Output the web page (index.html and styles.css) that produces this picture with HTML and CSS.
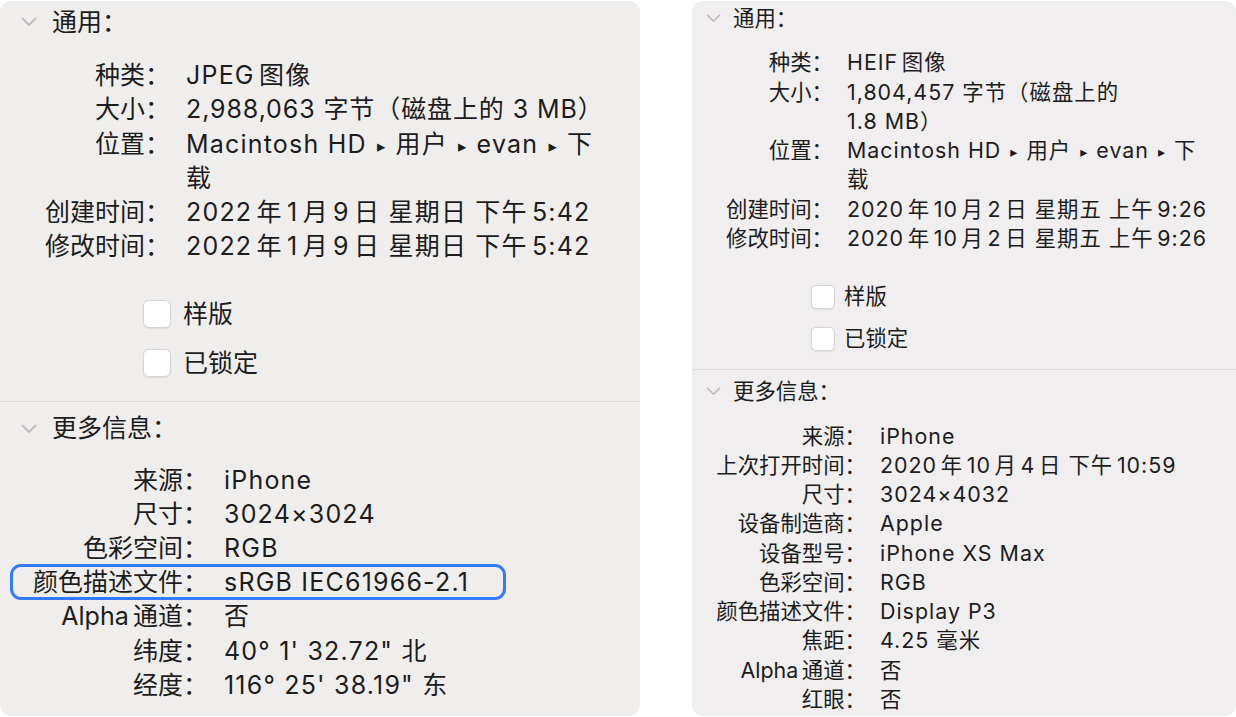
FILE: index.html
```html
<!DOCTYPE html>
<html lang="zh-CN">
<head>
<meta charset="utf-8">
<title>简介</title>
<link rel="stylesheet" href="styles.css">
</head>
<body>
<div class="panel panel-l">
  <section class="sec sec-general">
    <div class="head">
      <svg class="chev" viewBox="0 0 16 10" width="16" height="10"><polyline points="1.5,1.5 8,8 14.5,1.5"/></svg>
      <span>通用：</span>
    </div>
    <div class="rows">
      <div class="row"><span class="k">种类：</span><span class="v"><span class="sr">JPEG</span>图像</span></div>
      <div class="row"><span class="k">大小：</span><span class="v tight">2,988,063 字节（磁盘上的 3 MB）</span></div>
      <div class="row"><span class="k">位置：</span><span class="v">Macintosh HD <i class="tri">▸</i> 用户 <i class="tri">▸</i> evan <i class="tri">▸</i> 下<br>载</span></div>
      <div class="row"><span class="k">创建时间：</span><span class="v"><span class="sr">2022</span>年<span class="s">1</span>月<span class="s">9</span>日 星期日 下午<span class="sl">5:42</span></span></div>
      <div class="row"><span class="k">修改时间：</span><span class="v"><span class="sr">2022</span>年<span class="s">1</span>月<span class="s">9</span>日 星期日 下午<span class="sl">5:42</span></span></div>
    </div>
    <div class="checks">
      <label class="check"><span class="box"></span><span>样版</span></label>
      <label class="check"><span class="box"></span><span>已锁定</span></label>
    </div>
  </section>
  <section class="sec sec-more">
    <div class="head">
      <svg class="chev" viewBox="0 0 16 10" width="16" height="10"><polyline points="1.5,1.5 8,8 14.5,1.5"/></svg>
      <span>更多信息：</span>
    </div>
    <div class="rows">
      <div class="row"><span class="k">来源：</span><span class="v">iPhone</span></div>
      <div class="row"><span class="k">尺寸：</span><span class="v">3024×3024</span></div>
      <div class="row"><span class="k">色彩空间：</span><span class="v">RGB</span></div>
      <div class="row hl"><span class="k">颜色描述文件：</span><span class="v">sRGB IEC61966-2.1</span></div>
      <div class="row"><span class="k"><span class="sr">Alpha</span>通道：</span><span class="v">否</span></div>
      <div class="row"><span class="k">纬度：</span><span class="v">40° 1' 32.72" 北</span></div>
      <div class="row"><span class="k">经度：</span><span class="v">116° 25' 38.19" 东</span></div>
    </div>
  </section>
</div>

<div class="panel panel-r">
  <section class="sec sec-general">
    <div class="head">
      <svg class="chev" viewBox="0 0 16 10" width="15" height="9"><polyline points="1.5,1.5 8,8 14.5,1.5"/></svg>
      <span>通用：</span>
    </div>
    <div class="rows">
      <div class="row"><span class="k">种类：</span><span class="v"><span class="sr">HEIF</span>图像</span></div>
      <div class="row"><span class="k">大小：</span><span class="v">1,804,457 字节（磁盘上的<br>1.8 MB）</span></div>
      <div class="row"><span class="k">位置：</span><span class="v">Macintosh HD <i class="tri">▸</i> 用户 <i class="tri">▸</i> evan <i class="tri">▸</i> 下<br>载</span></div>
      <div class="row"><span class="k">创建时间：</span><span class="v"><span class="sr">2020</span>年<span class="s">10</span>月<span class="s">2</span>日 星期五 上午<span class="sl">9:26</span></span></div>
      <div class="row"><span class="k">修改时间：</span><span class="v"><span class="sr">2020</span>年<span class="s">10</span>月<span class="s">2</span>日 星期五 上午<span class="sl">9:26</span></span></div>
    </div>
    <div class="checks">
      <label class="check"><span class="box"></span><span>样版</span></label>
      <label class="check"><span class="box"></span><span>已锁定</span></label>
    </div>
  </section>
  <section class="sec sec-more">
    <div class="head">
      <svg class="chev" viewBox="0 0 16 10" width="15" height="9"><polyline points="1.5,1.5 8,8 14.5,1.5"/></svg>
      <span>更多信息：</span>
    </div>
    <div class="rows">
      <div class="row"><span class="k">来源：</span><span class="v">iPhone</span></div>
      <div class="row"><span class="k">上次打开时间：</span><span class="v"><span class="sr">2020</span>年<span class="s">10</span>月<span class="s">4</span>日 下午<span class="sl">10:59</span></span></div>
      <div class="row"><span class="k">尺寸：</span><span class="v">3024×4032</span></div>
      <div class="row"><span class="k">设备制造商：</span><span class="v">Apple</span></div>
      <div class="row"><span class="k">设备型号：</span><span class="v">iPhone XS Max</span></div>
      <div class="row"><span class="k">色彩空间：</span><span class="v">RGB</span></div>
      <div class="row"><span class="k">颜色描述文件：</span><span class="v">Display P3</span></div>
      <div class="row"><span class="k">焦距：</span><span class="v">4.25 毫米</span></div>
      <div class="row"><span class="k"><span class="sr">Alpha</span>通道：</span><span class="v">否</span></div>
      <div class="row"><span class="k">红眼：</span><span class="v">否</span></div>
    </div>
  </section>
</div>
</body>
</html>
```
FILE: styles.css
```css
* { box-sizing: border-box; }

html, body {
  margin: 0;
  background: #ffffff;
}

body {
  display: flex;
  gap: 52px;
  padding-top: 1px;
  font-family: "Inter", "Noto Sans CJK SC", sans-serif;
  color: #1c1c1c;
  -webkit-font-smoothing: antialiased;
}

.panel {
  height: 715px;
  border-radius: 11px;
  overflow: hidden;
}

.panel-l {
  width: 640px;
  background: #f0eeed;
  font-size: 25px;
  line-height: 34.2px;
}

.panel-r {
  width: 544px;
  background: #f1eeef;
  font-size: 21.4px;
  line-height: 29.25px;
}

.head {
  display: flex;
  align-items: center;
}

.chev {
  display: block;
  fill: none;
  stroke: #bebcbc;
  stroke-width: 1.8;
  stroke-linecap: round;
  stroke-linejoin: round;
}

.row {
  display: grid;
  align-items: start;
}

.k {
  text-align: right;
  white-space: nowrap;
}

.v {
  white-space: nowrap;
}

.panel-l .v { letter-spacing: 1.2px; }
.panel-l .v.tight { letter-spacing: 0.9px; }
.panel-r .v { letter-spacing: 1px; }

/* CJK / Latin auto-spacing */
.s { margin: 0 0.17em; }
.sl { margin-left: 0.17em; }
.sr { margin-right: 0.17em; }

.tri {
  font-style: normal;
  font-family: "DejaVu Sans", sans-serif;
  font-size: 0.66em;
  line-height: 0;
  vertical-align: 0.06em;
  letter-spacing: 0;
  margin: 0 2px;
}

.checks {
  display: flex;
  flex-direction: column;
}

.check {
  display: flex;
  align-items: center;
}

.box {
  display: block;
  background: #ffffff;
  border: 1px solid #d7d4d3;
  box-shadow: 0 0.5px 1.5px rgba(0, 0, 0, 0.08);
}

.sec-general {
  border-bottom: 1px solid #dcd9d8;
}

/* ---------- left panel ---------- */
.panel-l .sec-general { padding: 4px 0 21px; }
.panel-l .head { padding-left: 21px; gap: 15px; }
.panel-l .sec-general .rows { margin-top: 19px; }
.panel-l .sec-general .row { grid-template-columns: 170px auto; column-gap: 16px; }
.panel-l .checks { margin-top: 34px; padding-left: 143px; gap: 15px; }
.panel-l .check { gap: 12px; height: 34px; }
.panel-l .box { width: 28px; height: 28px; border-radius: 6px; }

.panel-l .sec-more { padding-top: 9px; }
.panel-l .sec-more .rows { margin-top: 17px; }
.panel-l .sec-more .row { grid-template-columns: 208px auto; column-gap: 16px; }

.row.hl { position: relative; }
.row.hl::after {
  content: "";
  position: absolute;
  left: 10px;
  width: 490px;
  top: -1px;
  bottom: -1px;
  border: 3px solid #3479f6;
  border-radius: 11px;
}

/* ---------- right panel ---------- */
.panel-r .sec-general { padding: 3px 0 16px; }
.panel-r .head { padding-left: 14px; gap: 12px; }
.panel-r .sec-general .rows { margin-top: 15px; }
.panel-r .sec-general .row { grid-template-columns: 141px auto; column-gap: 14px; }
.panel-r .checks { margin-top: 29px; padding-left: 119px; gap: 12.75px; }
.panel-r .check { gap: 9px; height: 29.25px; }
.panel-r .box { width: 24px; height: 24px; border-radius: 5px; }

.panel-r .sec-more { padding-top: 7px; }
.panel-r .sec-more .rows { margin-top: 15px; }
.panel-r .sec-more .row { grid-template-columns: 174px auto; column-gap: 14px; }
```
